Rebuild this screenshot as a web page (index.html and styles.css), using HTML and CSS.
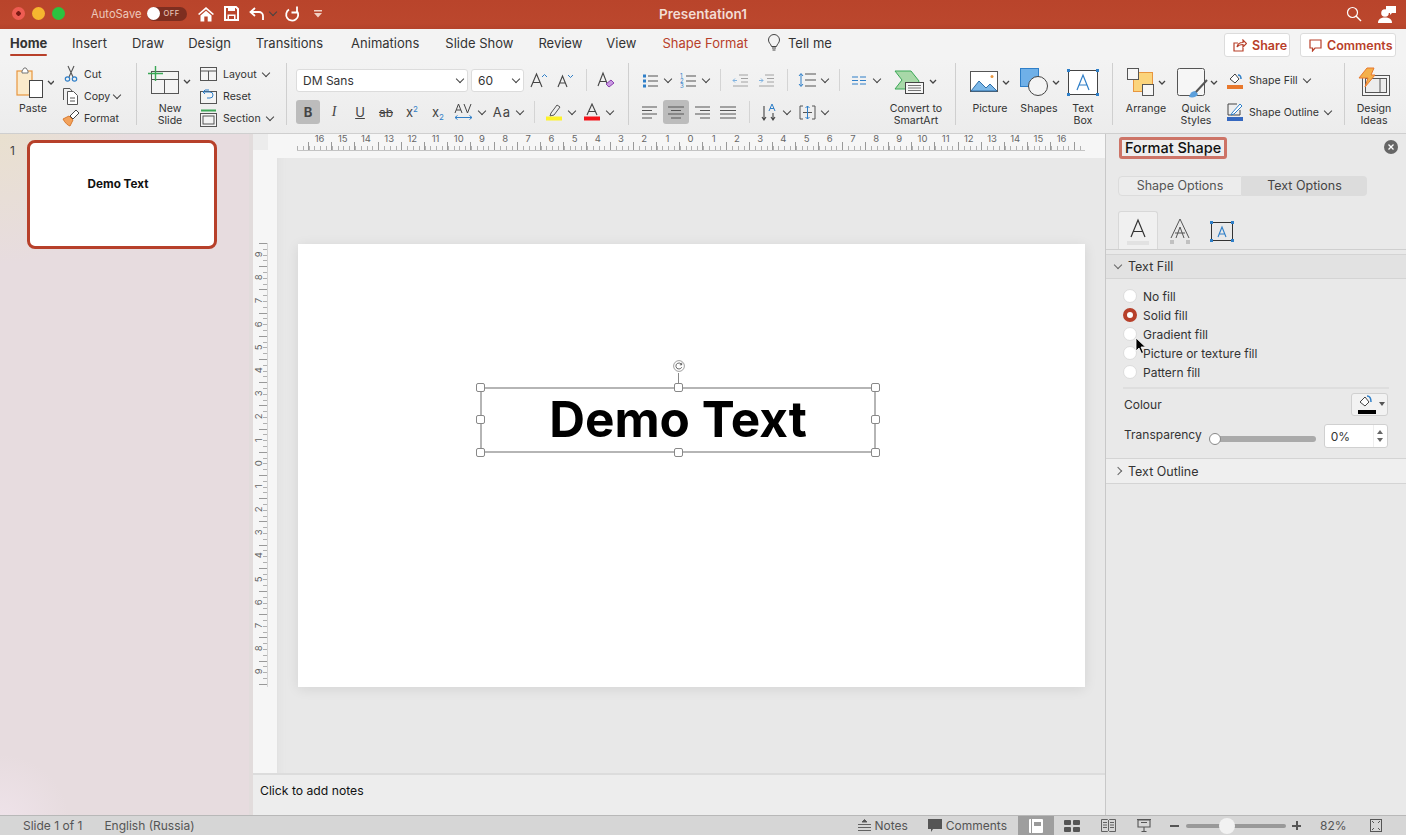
FILE: index.html
```html
<!DOCTYPE html>
<html lang="en">
<head>
    <meta charset="UTF-8">
    <title>Presentation1</title>
    <link rel="stylesheet" href="styles.css">
</head>
<body>
<div class="app">

    <!-- Title bar -->
    <header class="titlebar">
        <div class="tb-left">
            <span class="light red"></span><span class="light yellow"></span><span class="light green"></span>
            <span class="autosave">AutoSave</span>
            <span class="toggle"><i></i><b>OFF</b></span>
            <svg class="qa qa-home" width="18" height="16" viewBox="0 0 18 16"><path d="M1 8l8-7 8 7-1.2 1L9 3.2 2.2 9zM3.5 9.5L9 4.8l5.500 4.700V15.500h-3.800v-5H7.300v5H3.500z" fill="#fff"/></svg>
            <svg class="qa qa-save" width="15" height="15" viewBox="0 0 15 15"><path d="M1 1h11l2 2v11H1z" fill="none" stroke="#fff" stroke-width="2"/><path d="M4 1h7v4H4zM3.500 8.500h8V14h-8z" fill="#fff"/><path d="M5 10h5v3H5z" fill="#b8442b"/></svg>
            <svg class="qa qa-undo" width="16" height="14" viewBox="0 0 16 14"><path d="M6 1L1.500 5 6 9M2 5h8a4 4 0 014 4v4" fill="none" stroke="#fff" stroke-width="1.800"/></svg>
            <span class="chev light-chev"></span>
            <svg class="qa qa-redo" width="16" height="16" viewBox="0 0 16 16"><path d="M5 3.500a6 6 0 108 1.500" fill="none" stroke="#fff" stroke-width="1.800"/><path d="M13 .5v6H7.500" fill="none" stroke="#fff" stroke-width="1.800"/></svg>
            <svg class="qa qa-more" width="8" height="8" viewBox="0 0 8 8"><path d="M0 0h8v1.500H0zM0 3h8L4 7.500z" fill="#f0d0c4"/></svg>
        </div>
        <div class="tb-title">Presentation1</div>
        <div class="tb-right">
            <svg width="16" height="16" viewBox="0 0 16 16"><circle cx="6.500" cy="6.500" r="5" fill="none" stroke="#fff" stroke-width="1.200"/><path d="M10 10l5 5" stroke="#fff" stroke-width="1.400"/></svg>
            <svg width="20" height="20" viewBox="0 0 20 20"><path d="M9 2h10v7h-4l-2 2V9H9z" fill="#fff"/><circle cx="8" cy="9" r="3.800" fill="#fff"/><path d="M1 19c0-4 3-5.500 7-5.500s7 1.500 7 5.500z" fill="#fff"/></svg>
        </div>
    </header>

    <!-- Tabs -->
    <nav class="tabs">
        <span class="tab active">Home</span>
        <span class="tab t-insert">Insert</span>
        <span class="tab t-draw">Draw</span>
        <span class="tab t-design">Design</span>
        <span class="tab t-trans">Transitions</span>
        <span class="tab t-anim">Animations</span>
        <span class="tab t-show">Slide Show</span>
        <span class="tab t-review">Review</span>
        <span class="tab t-view">View</span>
        <span class="tab t-shape">Shape Format</span>
        <svg class="bulb" width="14" height="18" viewBox="0 0 14 18"><path d="M4.500 12.500C4 10 1.500 9 1.500 6a5.500 5.500 0 0111 0c0 3-2.500 4-3 6.500z" fill="none" stroke="#444" stroke-width="1"/><path d="M5 14h4M5.500 16h3" stroke="#444" stroke-width="1.200"/></svg>
        <span class="tab t-tell">Tell me</span>
        <div class="tab-btns">
            <button class="share-btn s-share">
                <svg width="14" height="13" viewBox="0 0 14 13"><path d="M5 4H1v8h9V9M4 8c.5-3 3-4.500 6-4.500V1l3.500 3.500L10 8V5.500C7.500 5.500 5.500 6 4 8z" fill="none" stroke="#b8402a" stroke-width="1.200"/></svg>
                Share
            </button>
            <button class="share-btn s-comments">
                <svg width="13" height="13" viewBox="0 0 13 13"><path d="M1 1h11v8H6l-2.500 3V9H1z" fill="none" stroke="#b8402a" stroke-width="1.200"/></svg>
                Comments
            </button>
        </div>
    </nav>

    <!-- Ribbon -->
    <section class="ribbon">

        <div class="group g-clip">
            <div class="big w42">
                <svg width="42" height="36" viewBox="0 0 42 36"><rect x="5" y="5" width="15" height="24" fill="#fbeacb" stroke="#e8963f" stroke-width="1.200"/><path d="M10 5l2-3h2l2 3v2h-6z" fill="#fff" stroke="#777"/><rect x="17.500" y="14.500" width="13" height="17" fill="#fff" stroke="#444"/><path d="M36 15l3 3 3-3" fill="none" stroke="#444" stroke-width="1.300"/></svg>
                <span>Paste</span>
            </div>
            <div class="stack s1">
                <div class="row-item">
                    <svg width="18" height="18" viewBox="0 0 18 18"><path d="M6 1l5 11M12 1L7 12" stroke="#555" stroke-width="1.100"/><circle cx="5.500" cy="14" r="2.200" fill="none" stroke="#2f7fc8" stroke-width="1.200"/><circle cx="12.500" cy="14" r="2.200" fill="none" stroke="#2f7fc8" stroke-width="1.200"/></svg>
                    <span>Cut</span>
                </div>
                <div class="row-item">
                    <svg width="18" height="18" viewBox="0 0 18 18"><path d="M1.500 13V1.500H8L10 4" fill="none" stroke="#555"/><path d="M5.500 4.500h6l4 4v9h-10z" fill="#fff" stroke="#555"/><path d="M8 11h5M8 14h5" stroke="#555"/></svg>
                    <span>Copy</span><span class="chev"></span>
                </div>
                <div class="row-item">
                    <svg width="18" height="18" viewBox="0 0 18 18"><path d="M1 10l6-3 4 4-3 6c-2-.5-5-3-7-7z" fill="#f2a25c" stroke="#d87a30"/><path d="M8 7l6-6 3 3-6 6z" fill="#fff" stroke="#444"/></svg>
                    <span>Format</span>
                </div>
            </div>
        </div>

        <div class="group g-slides">
            <div class="big w46">
                <svg width="46" height="36" viewBox="0 0 46 36"><rect x="4.500" y="5.500" width="27" height="22" fill="#f4f4f4" stroke="#555"/><path d="M4.500 13.500h27M17.500 13.500v14" stroke="#555"/><path d="M1 7.500h15M8.500 0v15" stroke="#3aa856" stroke-width="1.400"/><path d="M37 14l3 3 3-3" fill="none" stroke="#444" stroke-width="1.300"/></svg>
                <span>New<br>Slide</span>
            </div>
            <div class="stack s2">
                <div class="row-item">
                    <svg width="17" height="15" viewBox="0 0 17 15"><rect x=".5" y=".5" width="16" height="13" fill="#f4f4f4" stroke="#555"/><path d="M.5 4h16M8.500 4v9.500" stroke="#555"/></svg>
                    <span>Layout</span><span class="chev"></span>
                </div>
                <div class="row-item">
                    <svg width="17" height="15" viewBox="0 0 17 15"><rect x=".5" y="2.500" width="16" height="12" fill="#f4f4f4" stroke="#555"/><path d="M9 1H5L3 3l2 2M3 3h7a3 3 0 010 6H7" fill="none" stroke="#2f7fc8"/></svg>
                    <span>Reset</span>
                </div>
                <div class="row-item">
                    <svg width="17" height="18" viewBox="0 0 17 18"><path d="M1 1.500h15" stroke="#3aa856" stroke-width="2"/><rect x=".5" y="4.500" width="16" height="13" fill="#f4f4f4" stroke="#555"/><rect x="3" y="7" width="11" height="8" fill="#f4f4f4" stroke="#555"/></svg>
                    <span>Section</span><span class="chev"></span>
                </div>
            </div>
        </div>

        <div class="group g-font">
            <div class="rows">
                <div class="row">
                    <div class="select sel-font">DM Sans<span class="chev"></span></div>
                    <div class="select sel-size">60<span class="chev"></span></div>
                    <span class="tool"><svg width="18" height="16" viewBox="0 0 18 16"><path d="M1 15L6.500 2 12 15M3 10.500h7" fill="none" stroke="#444" stroke-width="1.100"/><path d="M12 5l2.500-2.500L17 5" fill="none" stroke="#2f7fc8"/></svg></span>
                    <span class="tool"><svg width="18" height="16" viewBox="0 0 18 16"><path d="M2 15L6.500 4 11 15M4 11h5" fill="none" stroke="#444" stroke-width="1.100"/><path d="M12 3l2.500 2.500L17 3" fill="none" stroke="#2f7fc8"/></svg></span>
                    <span class="sep"></span>
                    <span class="tool"><svg width="18" height="18" viewBox="0 0 18 18"><path d="M1 15L6 2l5 13M3 10.500h6" fill="none" stroke="#444" stroke-width="1.100"/><path d="M9 13l5-4 3 3-5 4z" fill="#c89ae0" stroke="#8a3fb0"/></svg></span>
                </div>
                <div class="row">
                    <span class="tool on bold-btn"><b>B</b></span>
                    <span class="tool serif-i">I</span>
                    <span class="tool under">U</span>
                    <span class="tool strike">ab</span>
                    <span class="tool">x<sup class="blue">2</sup></span>
                    <span class="tool">x<sub class="blue">2</sub></span>
                    <span class="tool"><svg width="20" height="18" viewBox="0 0 20 18"><path d="M1 10l3.500-9L8 10M2.300 7h4.500M10 1l3.500 9L17 1" fill="none" stroke="#444"/><path d="M1 14.500h17M3.500 12.500l-2.500 2 2.500 2M15.500 12.500l2.500 2-2.500 2" fill="none" stroke="#2f7fc8"/></svg></span><span class="chev"></span>
                    <span class="tool aa">Aa</span><span class="chev"></span>
                    <span class="sep"></span>
                    <span class="tool"><svg width="18" height="18" viewBox="0 0 18 18"><path d="M6 10l6-8 3 2-6 8-4 1z" fill="none" stroke="#555"/><rect x="1" y="13.500" width="16" height="4" fill="#fdf22a"/></svg></span><span class="chev"></span>
                    <span class="tool"><svg width="18" height="18" viewBox="0 0 18 18"><path d="M4 12L9 1l5 11M5.500 8.500h7" fill="none" stroke="#444" stroke-width="1.100"/><rect x="1" y="13.500" width="16" height="4" fill="#f4141a"/></svg></span><span class="chev"></span>
                </div>
            </div>
        </div>

        <div class="group g-para">
            <div class="rows">
                <div class="row">
                    <span class="tool"><svg width="17" height="15" viewBox="0 0 17 15"><path d="M1 1.500h3v3H1zM1 6.500h3v3H1zM1 11.500h3v3H1z" fill="#2f7fc8"/><path d="M6 3h10M6 8h10M6 13h10" stroke="#555" stroke-width="1.200"/></svg></span><span class="chev"></span>
                    <span class="tool"><svg width="17" height="15" viewBox="0 0 17 15"><text x="0" y="5" class="mini">1</text><text x="0" y="10" class="mini">2</text><text x="0" y="15" class="mini">3</text><path d="M6 3h10M6 8h10M6 13h10" stroke="#555" stroke-width="1.200"/></svg></span><span class="chev"></span>
                    <span class="sep"></span>
                    <span class="tool faded"><svg width="16" height="13" viewBox="0 0 16 13"><path d="M7 1h9M9 4.500h7M9 8h7M1 12h15" stroke="#888"/><path d="M5 6.500H1M3 4.500l-2 2 2 2" fill="none" stroke="#5b9fdc"/></svg></span>
                    <span class="tool faded"><svg width="16" height="13" viewBox="0 0 16 13"><path d="M7 1h9M9 4.500h7M9 8h7M1 12h15" stroke="#888"/><path d="M1 6.500h4M3 4.500l2 2-2 2" fill="none" stroke="#5b9fdc"/></svg></span>
                    <span class="sep"></span>
                    <span class="tool"><svg width="18" height="16" viewBox="0 0 18 16"><path d="M7 2h11M7 8h11M7 14h11" stroke="#555" stroke-width="1.200"/><path d="M3 2v12M1 4l2-2.500L5 4M1 12l2 2.500L5 12" fill="none" stroke="#2f7fc8"/></svg></span><span class="chev"></span>
                    <span class="sep"></span>
                    <span class="tool"><svg width="14" height="9" viewBox="0 0 14 9"><path d="M0 1h6M0 4.500h6M0 8h6M8 1h6M8 4.500h6M8 8h6" stroke="#2f7fc8" stroke-width="1.200"/></svg></span><span class="chev"></span>
                </div>
                <div class="row">
                    <span class="tool"><svg width="16" height="13" viewBox="0 0 16 13"><path d="M0 1h15M0 4.500h10M0 8h15M0 12h10" stroke="#555" stroke-width="1.100"/></svg></span>
                    <span class="tool on"><svg width="16" height="13" viewBox="0 0 16 13"><path d="M0 1h16M3 4.500h10M0 8h16M3 12h10" stroke="#555" stroke-width="1.100"/></svg></span>
                    <span class="tool"><svg width="16" height="13" viewBox="0 0 16 13"><path d="M1 1h15M6 4.500h10M1 8h15M6 12h10" stroke="#555" stroke-width="1.100"/></svg></span>
                    <span class="tool"><svg width="16" height="13" viewBox="0 0 16 13"><path d="M0 1h16M0 4.500h16M0 8h16M0 12h16" stroke="#555" stroke-width="1.100"/></svg></span>
                    <span class="sep"></span>
                    <span class="tool"><svg width="16" height="18" viewBox="0 0 16 18"><path d="M3 3v14M1 14l2 3 2-3M12 10v7M10 14l2 3 2-3" fill="none" stroke="#444" stroke-width="1.100"/><path d="M8 8l3-7 3 7M9 5.500h4" fill="none" stroke="#2f7fc8"/></svg></span><span class="chev"></span>
                    <span class="tool"><svg width="17" height="15" viewBox="0 0 17 15"><path d="M4 1H1v13h3M13 1h3v13h-3M4 7.500h9" fill="none" stroke="#555"/><path d="M8.500 1v13M6.500 3l2-2 2 2M6.500 12l2 2 2-2" fill="none" stroke="#2f7fc8"/></svg></span><span class="chev"></span>
                </div>
            </div>
            <div class="big w58">
                <svg width="58" height="36" viewBox="0 0 58 36"><path d="M8 5h16l8 10-3 8H8l7-9z" fill="#a8d8a8" stroke="#3aa856"/><rect x="18.500" y="16.500" width="18" height="11" fill="#f6f6f6" stroke="#444"/><path d="M21 19.500h13M21 22h13M21 24.500h13" stroke="#777"/><path d="M43 14l3 3 3-3" fill="none" stroke="#444" stroke-width="1.300"/></svg>
                <span>Convert to<br>SmartArt</span>
            </div>
        </div>

        <div class="group g-insert">
            <div class="big w50">
                <svg width="50" height="36" viewBox="0 0 50 36"><rect x="5.500" y="5.500" width="27" height="20" fill="#fff" stroke="#555"/><path d="M6 25l8-10 7 7 4-4 7 7z" fill="#7cb8e8" stroke="#2f6fa8"/><circle cx="27" cy="10.500" r="1.500" fill="#e8963f"/><path d="M38 15l3 3 3-3" fill="none" stroke="#444" stroke-width="1.300"/></svg>
                <span>Picture</span>
            </div>
            <div class="big w48">
                <svg width="48" height="36" viewBox="0 0 48 36"><rect x="5.500" y="2.500" width="18" height="18" fill="#6fb0e8" stroke="#2f7fc8"/><circle cx="23" cy="20" r="9.500" fill="#f4f4f4" stroke="#444"/><path d="M38 15l3 3 3-3" fill="none" stroke="#444" stroke-width="1.300"/></svg>
                <span>Shapes</span>
            </div>
            <div class="big w40">
                <svg width="40" height="36" viewBox="0 0 40 36"><rect x="5.500" y="4.500" width="29" height="24" fill="#fff" stroke="#444"/><path d="M14 24l6-15 6 15M16 19h8" fill="none" stroke="#2f7fc8" stroke-width="1.200"/><path d="M4 3h3v3H4zM33 3h3v3h-3zM4 27h3v3H4zM33 27h3v3h-3z" fill="#2f7fc8"/></svg>
                <span>Text<br>Box</span>
            </div>
        </div>

        <div class="group g-format">
            <div class="big w44">
                <svg width="44" height="36" viewBox="0 0 44 36"><rect x="9.500" y="6.500" width="19" height="19" fill="#fbd47c" stroke="#e8963f"/><rect x="3.500" y="2.500" width="11" height="11" fill="#f6f6f6" stroke="#555"/><rect x="18.500" y="18.500" width="11" height="11" fill="#f6f6f6" stroke="#555"/><path d="M35 15l3 3 3-3" fill="none" stroke="#444" stroke-width="1.300"/></svg>
                <span>Arrange</span>
            </div>
            <div class="big w50">
                <svg width="50" height="36" viewBox="0 0 50 36"><rect x="6.500" y="2.500" width="27" height="27" rx="2" fill="#f6f6f6" stroke="#555"/><path d="M36 14L24 27" stroke="#555" stroke-width="2"/><path d="M18 31c1-4 3-6 6-6l3 3c-1 3-5 4-9 3z" fill="#5b9fdc"/><path d="M40 15l3 3 3-3" fill="none" stroke="#444" stroke-width="1.300"/></svg>
                <span>Quick<br>Styles</span>
            </div>
            <div class="stack s3">
                <div class="row-item">
                    <svg width="16" height="18" viewBox="0 0 16 18"><path d="M3 8l5-5 4 5-4 4z" fill="#fff" stroke="#444"/><path d="M11 4c2 0 3 2 3 4" fill="none" stroke="#2f7fc8" stroke-width="1.500"/><rect y="14" width="16" height="4" fill="#e8782c"/></svg>
                    <span>Shape Fill</span><span class="chev"></span>
                </div>
                <div class="row-item">
                    <svg width="16" height="18" viewBox="0 0 16 18"><path d="M1 1h9M1 1v11h12V7" fill="none" stroke="#444"/><path d="M5 10l8-9 2 2-8 8-3 1z" fill="#fff" stroke="#2f7fc8"/><rect y="14" width="16" height="4" fill="#3568c0"/></svg>
                    <span>Shape Outline</span><span class="chev"></span>
                </div>
            </div>
        </div>

        <div class="group g-ideas">
            <div class="big w48">
                <svg width="48" height="36" viewBox="0 0 48 36"><rect x="12.500" y="9.500" width="27" height="20" fill="#f4f4f4" stroke="#555"/><rect x="15.500" y="12.500" width="21" height="14" fill="#ececec" stroke="#555"/><path d="M30 12.500v14" stroke="#555"/><path d="M17 2h7l-3 7h4l-10 12 3-9H9z" fill="#f4b04a" stroke="#e8782c"/></svg>
                <span>Design<br>Ideas</span>
            </div>
        </div>
    </section>

    <main class="main">
        <!-- Slide thumbnails -->
        <aside class="thumbs">
            <span class="thumb-num">1</span>
            <div class="thumb">Demo Text</div>
        </aside>

        <!-- Editor -->
        <div class="editor">
            <div class="hruler-row">
                <div class="corner"></div>
                <div class="hruler">
                    <span>16</span><span>15</span><span>14</span><span>13</span><span>12</span><span>11</span><span>10</span><span>9</span><span>8</span><span>7</span><span>6</span><span>5</span><span>4</span><span>3</span><span>2</span><span>1</span><span>0</span><span>1</span><span>2</span><span>3</span><span>4</span><span>5</span><span>6</span><span>7</span><span>8</span><span>9</span><span>10</span><span>11</span><span>12</span><span>13</span><span>14</span><span>15</span><span>16</span>
                </div>
            </div>
            <div class="work">
                <div class="vruler-col">
                    <div class="vruler">
                        <span>9</span><span>8</span><span>7</span><span>6</span><span>5</span><span>4</span><span>3</span><span>2</span><span>1</span><span>0</span><span>1</span><span>2</span><span>3</span><span>4</span><span>5</span><span>6</span><span>7</span><span>8</span><span>9</span>
                    </div>
                </div>
                <div class="canvas">
                    <div class="slide">
                        <div class="textbox">
                            Demo Text
                            <i class="rot-stem"></i>
                            <svg class="rot" width="12" height="12" viewBox="0 0 12 12"><circle cx="6" cy="6" r="5.400" fill="#fff" stroke="#888" stroke-width=".8"/><path d="M8.500 4.500A3 3 0 106 9a3 3 0 002.700-1.800M8.700 2.800v2H6.800" fill="none" stroke="#444" stroke-width=".8"/></svg>
                            <i class="h tl"></i><i class="h tc"></i><i class="h tr"></i>
                            <i class="h ml"></i><i class="h mr"></i>
                            <i class="h bl"></i><i class="h bc"></i><i class="h br"></i>
                        </div>
                    </div>
                </div>
            </div>
            <div class="notes">Click to add notes</div>
        </div>

        <!-- Format Shape pane -->
        <aside class="pane">
            <div class="pane-head">
                <span class="pane-title">Format Shape</span>
                <span class="pane-close">
                    <svg width="14" height="14" viewBox="0 0 14 14"><circle cx="7" cy="7" r="7" fill="#666"/><path d="M4.500 4.500l5 5M9.500 4.500l-5 5" stroke="#fff" stroke-width="1.300"/></svg>
                </span>
            </div>
            <div class="seg">
                <span class="seg-a">Shape Options</span>
                <span class="seg-b">Text Options</span>
            </div>
            <div class="icon-tabs">
                <span class="itab current">
                    <svg width="24" height="30" viewBox="0 0 24 30"><path d="M5 20L12 3l7 17M7.500 14.500h9" fill="none" stroke="#333" stroke-width="1.200"/><rect x="1" y="24" width="22" height="4" fill="#e2e2e2"/></svg>
                </span>
                <span class="itab">
                    <svg width="22" height="28" viewBox="0 0 22 28"><path d="M2 21L11 2l9 19M6 16h10M7 21l4-11 4 11" fill="none" stroke="#555" stroke-width="1"/><path d="M2 23v4M4 23v4M18 23v4M20 23v4" stroke="#999"/></svg>
                </span>
                <span class="itab">
                    <svg width="26" height="24" viewBox="0 0 26 24"><rect x="2.500" y="3.500" width="21" height="18" fill="none" stroke="#333"/><path d="M9 18l4-10 4 10M10.500 15h5" fill="none" stroke="#2f7fc8" stroke-width="1.100"/><path d="M1 2h3v3H1zM22 2h3v3h-3zM1 20h3v3H1zM22 20h3v3h-3z" fill="#2f7fc8"/></svg>
                </span>
            </div>
            <div class="sec sec-open"><span class="sec-chev down"></span>Text Fill</div>
            <div class="fill-opts">
                <label class="radio"><i></i>No fill</label>
                <label class="radio on"><i></i>Solid fill</label>
                <label class="radio"><i></i>Gradient fill</label>
                <label class="radio"><i></i>Picture or texture fill</label>
                <label class="radio"><i></i>Pattern fill</label>
            </div>
            <div class="prop prop-colour">
                <span>Colour</span>
                <span class="colour-btn">
                    <svg width="18" height="19" viewBox="0 0 18 19"><path d="M2 7l5-5 4 5-4 4z" fill="#fff" stroke="#444"/><path d="M9 1c3 0 4 3 4 6" fill="none" stroke="#2f7fc8" stroke-width="1.500"/><rect y="15" width="18" height="4" fill="#000"/></svg>
                    <i class="caret"></i>
                </span>
            </div>
            <div class="prop prop-trans">
                <span class="trans-label">Transparency</span>
                <span class="slider"><i></i></span>
                <span class="num-input">0%<span class="spin"><i class="up"></i><i class="dn"></i></span></span>
            </div>
            <div class="sec sec-closed"><span class="sec-chev right"></span>Text Outline</div>
            <svg class="cursor" width="12" height="18" viewBox="0 0 12 18"><path d="M1 1v13l3-3 2.500 5.500 2-1L6 10h4.500z" fill="#000" stroke="#fff" stroke-width=".8"/></svg>
        </aside>
    </main>

    <!-- Status bar -->
    <footer class="status">
        <span class="st-slide">Slide 1 of 1</span>
        <span class="st-lang">English (Russia)</span>
        <div class="st-right">
            <svg class="st-notes" width="13" height="13" viewBox="0 0 13 13"><path d="M4 3l2.500-2.500L9 3zM0 5.500h13M0 8.500h13M0 11.500h13" stroke="#555" fill="#555" stroke-width=".9"/></svg>
            <span class="st-t1">Notes</span>
            <svg class="st-cm" width="14" height="13" viewBox="0 0 14 13"><path d="M0 0h14v10H5l-2 3v-3H0z" fill="#555"/></svg>
            <span class="st-t2">Comments</span>
            <span class="view on"><svg width="14" height="14" viewBox="0 0 14 14"><rect width="14" height="14" rx="1" fill="#fff"/><path d="M2.500 0v14" stroke="#999"/><path d="M5 3h7v4H5z" fill="#999"/></svg></span>
            <span class="view"><svg width="16" height="12" viewBox="0 0 16 12"><rect width="7" height="5" rx="1" fill="#555"/><rect x="9" width="7" height="5" rx="1" fill="#555"/><rect y="7" width="7" height="5" rx="1" fill="#555"/><rect x="9" y="7" width="7" height="5" rx="1" fill="#555"/></svg></span>
            <span class="view"><svg width="15" height="13" viewBox="0 0 15 13"><path d="M.5.500h6l1 1 1-1h6v12h-6l-1-1-1 1h-6zM7.500 1.500v10M2 3.500h4M2 6h4M2 8.500h4M9 3.500h4M9 6h4M9 8.500h4" fill="none" stroke="#555" stroke-width=".9"/></svg></span>
            <span class="view"><svg width="14" height="13" viewBox="0 0 14 13"><path d="M1 1h12v7H1zM0 .5h14M7 8v4M4.500 12.500h5M4 3.500h6" fill="none" stroke="#555" stroke-width="1.100"/></svg></span>
            <span class="zoom-minus"></span>
            <span class="zoom-track"><i></i></span>
            <span class="zoom-plus"></span>
            <span class="zoom-pct">82%</span>
            <svg class="fit" width="12" height="13" viewBox="0 0 12 13"><rect x=".5" y=".5" width="11" height="12" fill="none" stroke="#555"/><path d="M2 2l2 2M10 2L8 4M2 11l2-2M10 11L8 9" stroke="#555"/></svg>
        </div>
    </footer>
</div>
</body>
</html>
```

FILE: styles.css
```css
* {
    box-sizing: border-box;
}
html, body {
    margin: 0;
    height: 100%;
    overflow: hidden;
}
body {
    font-family: "Inter", "Liberation Sans", sans-serif;
    font-size: 10.6px;
    color: #333;
    background-color: #e8e8e8;
}
svg {
    display: block;
    flex: none;
}
.app {
    display: flex;
    flex-direction: column;
    height: 835px;
}

/* title bar */
.titlebar {
    display: grid;
    grid-template-columns: 1fr auto 1fr;
    align-items: center;
    height: 29px;
    padding-bottom: 2px;
    background: linear-gradient(#b9442b, #bb472d 80%, #b4432a);
    color: #f2d9d0;
}
.tb-left {
    display: flex;
    align-items: center;
    padding-left: 12px;
}
.light {
    width: 13px;
    height: 13px;
    border-radius: 50%;
    margin-right: 7px;
}
.light.red {
    background: radial-gradient(#7a1a14 0 2px, #ee5c52 2.5px);
}
.light.yellow {
    background-color: #f6b62f;
}
.light.green {
    background-color: #2cc23f;
}
.autosave {
    margin-left: 19px;
    font-size: 11.2px;
    color: #edc9bc;
}
.toggle {
    display: flex;
    align-items: center;
    width: 40px;
    height: 14px;
    margin-left: 6px;
    border-radius: 7px;
    background-color: #7d2e20;
}
.toggle i {
    width: 13px;
    height: 13px;
    border-radius: 50%;
    background-color: #fff;
}
.toggle b {
    margin-left: 3px;
    font-size: 7.5px;
    font-weight: 500;
    letter-spacing: .5px;
    color: #e8c4b8;
}
.qa-home { margin-left: 10px; }
.qa-save { margin-left: 9px; }
.qa-undo { margin-left: 10px; }
.light-chev { margin-left: 2px; }
.light-chev::before { border-color: #f0d0c4; }
.qa-redo { margin-left: 5px; }
.qa-more { margin-left: 14px; }
.tb-title {
    font-size: 13.500px;
    font-weight: 600;
    color: #f3dcd4;
}
.tb-right {
    display: flex;
    align-items: center;
    justify-content: flex-end;
    gap: 15px;
    padding-right: 9px;
}

/* tabs */
.tabs {
    display: flex;
    align-items: center;
    height: 31px;
    padding: 0 0 4px 10px;
    background-color: #f3f3f3;
    font-size: 13px;
    color: #333;
}
.tab {
    white-space: nowrap;
}
.tab.active {
    position: relative;
    width: 37px;
    font-weight: 700;
}
.tab.active::after {
    content: "";
    position: absolute;
    left: 0;
    right: 0;
    bottom: -5px;
    height: 2px;
    border-radius: 1px;
    background-color: #b8402a;
}
.t-insert { margin-left: 25px; }
.t-draw { margin-left: 25px; }
.t-design { margin-left: 24px; }
.t-trans { margin-left: 25px; }
.t-anim { margin-left: 28px; }
.t-show { margin-left: 26px; }
.t-review { margin-left: 25px; }
.t-view { margin-left: 24px; }
.t-shape { margin-left: 26px; color: #b8402a; }
.bulb { margin-left: 19px; }
.t-tell { margin-left: 7px; }
.tab-btns {
    display: flex;
    align-self: flex-end;
    gap: 10px;
    margin: 0 0 -1px auto;
    padding-right: 10px;
}
.share-btn {
    display: flex;
    align-items: center;
    gap: 5px;
    height: 24px;
    padding: 0 0 0 8px;
    border: 1px solid #dcdcdc;
    border-radius: 3px;
    background-color: #fff;
    font-family: inherit;
    font-size: 12.5px;
    font-weight: 600;
    color: #b8402a;
}
.s-share { width: 66px; }
.s-comments { width: 96px; }

/* ribbon */
.ribbon {
    display: flex;
    height: 74px;
    padding-bottom: 1px;
    border-bottom: 1px solid #cfcfcf;
    background: linear-gradient(#f3f3f3, #ececec);
}
.group {
    display: flex;
    position: relative;
    flex: none;
    height: 73px;
}
.group::after {
    content: "";
    position: absolute;
    right: 0;
    top: 3px;
    bottom: 8px;
    width: 1px;
    background-color: #cfcfcf;
}
.g-clip { width: 137px; padding-left: 12px; }
.g-slides { width: 150px; padding-left: 10px; }
.g-font { width: 342px; padding-left: 8px; }
.g-para { width: 327px; padding-left: 8px; }
.g-insert { width: 157px; padding-left: 9px; }
.g-format { width: 232px; padding-left: 11px; }
.g-ideas { width: 62px; padding-left: 5px; }
.g-ideas::after { display: none; }

.big {
    display: flex;
    flex-direction: column;
    align-items: center;
    flex: none;
    padding-top: 6px;
    line-height: 12px;
    text-align: center;
    white-space: nowrap;
}
.big span {
    display: block;
    margin-top: 1px;
}
.w40 { width: 40px; }
.w42 { width: 42px; }
.w44 { width: 44px; }
.w46 { width: 46px; }
.w48 { width: 48px; }
.w50 { width: 50px; }
.w58 { width: 58px; }
.g-para .big { margin-left: 4px; }
.g-format .big + .big { margin-left: 3px; }

.stack {
    display: flex;
    flex-direction: column;
    padding-top: 3px;
}
.s1 { margin-left: 8px; }
.s2 { margin-left: 7px; }
.s3 { margin-left: 6px; padding-top: 11px; gap: 14px; }
.row-item {
    display: flex;
    align-items: center;
    gap: 4px;
    height: 22px;
    white-space: nowrap;
}
.s3 .row-item { height: 18px; gap: 6px; }
.s2 .row-item { gap: 6px; }
.row-item .chev { margin-left: -3px; }

.rows {
    display: flex;
    flex-direction: column;
    gap: 8px;
    padding-top: 8px;
    flex: none;
}
.row {
    display: flex;
    align-items: center;
    height: 24px;
}
.tool {
    display: flex;
    align-items: center;
    justify-content: center;
    flex: none;
    width: 26px;
    height: 24px;
    font-size: 13px;
    color: #444;
}
.tool.on {
    border-radius: 3px;
    background-color: #bcbcbc;
}
.bold-btn {
    width: 24px;
    margin: 0 1px;
}
.serif-i {
    font-family: "Liberation Serif", serif;
    font-style: italic;
    font-size: 14px;
}
.under { text-decoration: underline; }
.strike { text-decoration: line-through; font-size: 12px; }
.aa { letter-spacing: 1px; font-size: 13px; }
.tool sup, .tool sub {
    font-size: 8px;
    line-height: 10px;
}
.tool sup {
    align-self: flex-start;
    margin-top: 4px;
}
.tool sub {
    align-self: flex-end;
    margin-bottom: 2px;
}
.blue { color: #2f7fc8; }
.faded { opacity: .75; }
.mini {
    font-size: 6px;
    fill: #2f7fc8;
}
.chev {
    display: flex;
    align-items: center;
    justify-content: center;
    flex: none;
    width: 12px;
    height: 12px;
}
.chev::before {
    content: "";
    width: 5px;
    height: 5px;
    margin-top: -3px;
    border-right: 1.3px solid #444;
    border-bottom: 1.3px solid #444;
    transform: rotate(45deg);
}
.tool + .chev { margin-left: -1px; }
.chev + .tool { margin-left: 1px; }
.sep {
    flex: none;
    width: 1px;
    height: 22px;
    margin: 0 6px 0 8px;
    background-color: #d4d4d4;
}
.select {
    display: flex;
    align-items: center;
    justify-content: space-between;
    flex: none;
    height: 23px;
    padding: 0 1px 0 6px;
    border: 1px solid #dcdcdc;
    border-radius: 3px;
    background-color: #fff;
    font-size: 12px;
    color: #333;
}
.sel-font { width: 172px; margin-left: 1px; }
.sel-size { width: 53px; margin: 0 2px 0 3px; }

/* main area */
.main {
    display: flex;
    flex: 1;
    min-height: 0;
}
.thumbs {
    display: flex;
    align-items: flex-start;
    flex: none;
    width: 253px;
    padding: 6px 0 0 8px;
    border-right: 4px solid #e2dcdc;
    background:
        radial-gradient(circle at 0 690px, #efe3ea, transparent 70px),
        radial-gradient(circle at 0 0, #e9e0cf, transparent 130px),
        #e7dcdf;
}
.thumb-num {
    width: 19px;
    padding: 1px 0 0 2px;
    font-size: 12px;
    line-height: 20px;
    color: #444;
}
.thumb {
    display: flex;
    justify-content: center;
    width: 190px;
    height: 109px;
    padding: 34px 8px 0 0;
    border: 3px solid #b7402a;
    border-radius: 8px;
    background-color: #fff;
    font-size: 11.700px;
    font-weight: 700;
    color: #111;
}

.editor {
    display: flex;
    flex-direction: column;
    width: 852px;
    flex: none;
    background-color: #f6f6f6;
}
.hruler-row {
    display: flex;
    height: 24px;
    flex: none;
}
.corner {
    width: 15px;
    height: 16px;
    background-color: #ececec;
}
.hruler {
    display: flex;
    width: 788px;
    height: 17px;
    margin-left: 29px;
    padding-left: 11px;
    background:
        repeating-linear-gradient(90deg, #999 0 1px, transparent 1px 23.2px) 11.400px 100% / 100% 8px no-repeat,
        repeating-linear-gradient(90deg, #b0b0b0 0 1px, transparent 1px 5.800px) 0 100% / 100% 4px no-repeat;
    border-bottom: 1px solid #c4c4c4;
}
.hruler span {
    flex: none;
    width: 23.2px;
    font-size: 9.500px;
    line-height: 10px;
    text-align: center;
    color: #666;
}
.work {
    display: flex;
    flex: 1;
    min-height: 0;
}
.vruler-col {
    flex: none;
    width: 24px;
    padding-top: 85px;
}
.vruler {
    display: flex;
    flex-direction: column;
    width: 15px;
    height: 444px;
    background:
        repeating-linear-gradient(#999 0 1px, transparent 1px 23.2px) 100% 0 / 8px 100% no-repeat,
        repeating-linear-gradient(#b0b0b0 0 1px, transparent 1px 5.800px) 100% 0 / 4px 100% no-repeat;
    border-right: 1px solid #d4d4d4;
}
.vruler span {
    display: flex;
    align-items: center;
    justify-content: center;
    flex: none;
    width: 9px;
    height: 23.2px;
    margin-left: 1px;
    font-size: 9.500px;
    color: #666;
    writing-mode: vertical-rl;
    transform: rotate(180deg);
}
.canvas {
    flex: 1;
    padding: 86px 0 0 21px;
    background-color: #e8e8e8;
    box-shadow: inset 10px 0 10px -10px #ddd;
}
.slide {
    position: relative;
    width: 787px;
    height: 443px;
    background-color: #fff;
    box-shadow: 0 2px 12px rgba(0, 0, 0, .09);
}
.textbox {
    position: absolute;
    left: 182px;
    top: 143px;
    display: flex;
    align-items: center;
    justify-content: center;
    width: 396px;
    height: 66px;
    padding-bottom: 3px;
    border: 2px solid #b5b5b5;
    font-size: 49.500px;
    font-weight: 700;
    color: #000;
    white-space: nowrap;
}
.rot-stem {
    position: absolute;
    left: 196px;
    top: -16px;
    width: 1px;
    height: 14px;
    background-color: #888;
}
.rot {
    position: absolute;
    left: 191px;
    top: -29px;
}
.h {
    position: absolute;
    width: 9px;
    height: 9px;
    border: 1px solid #888;
    border-radius: 2px;
    background-color: #fff;
}
.tl { left: -6px; top: -6px; }
.tc { left: 192px; top: -6px; }
.tr { right: -6px; top: -6px; }
.ml { left: -6px; top: 26px; }
.mr { right: -6px; top: 26px; }
.bl { left: -6px; bottom: -6px; }
.bc { left: 192px; bottom: -6px; }
.br { right: -6px; bottom: -6px; }
.notes {
    display: flex;
    align-items: center;
    flex: none;
    height: 42px;
    padding: 0 0 9px 7px;
    border-top: 2px solid #dcdcdc;
    background-color: #ededed;
    font-size: 12.200px;
    color: #111;
}

/* format pane */
.pane {
    position: relative;
    flex: none;
    width: 301px;
    border-left: 1px solid #c8c8c8;
    background-color: #e9e9e9;
}
.pane-head {
    display: flex;
    align-items: flex-start;
    justify-content: space-between;
    height: 27px;
    padding: 3px 8px 0 13px;
}
.pane-close {
    margin-top: 3px;
}
.pane-title {
    padding: 0 3px;
    border: 3px solid #cd7467;
    border-radius: 3px;
    font-size: 14.500px;
    font-weight: 500;
    line-height: 16px;
    color: #111;
    background-color: #eee;
}
.seg {
    display: flex;
    width: 249px;
    height: 20px;
    margin: 15px 0 0 12px;
    font-size: 12.500px;
    line-height: 18px;
    color: #555;
    text-align: center;
}
.seg-a {
    width: 124px;
    border: 1px solid #dcdcdc;
    border-radius: 4px 0 0 4px;
    background-color: #ececec;
}
.seg-b {
    flex: 1;
    line-height: 20px;
    border-radius: 0 4px 4px 0;
    background-color: #dcdcdc;
    color: #444;
}
.icon-tabs {
    display: flex;
    height: 39px;
    margin-top: 15px;
    padding-left: 12px;
    border-bottom: 1px solid #cfcfcf;
}
.itab {
    display: flex;
    align-items: center;
    justify-content: center;
    width: 40px;
    height: 38px;
    margin-right: 2px;
    padding-top: 2px;
}
.itab.current {
    border: 1px solid #d8d8d8;
    border-bottom: none;
    border-radius: 3px 3px 0 0;
    background-color: #f0f0f0;
}
.sec {
    display: flex;
    align-items: center;
    font-size: 12.500px;
    color: #333;
    border-top: 1px solid #d4d4d4;
    border-bottom: 1px solid #d4d4d4;
}
.sec-open {
    height: 25px;
    margin-top: 4px;
    background-color: #e2e2e2;
}
.sec-closed {
    height: 26px;
    margin-top: 7px;
    background-color: #efefef;
}
.sec-chev {
    width: 6px;
    height: 6px;
    margin: 0 7px 0 9px;
    border-right: 1.200px solid #666;
    border-bottom: 1.200px solid #666;
}
.sec-chev.down {
    margin-top: -3px;
    transform: rotate(45deg);
}
.sec-chev.right {
    transform: rotate(-45deg);
}
.fill-opts {
    display: flex;
    flex-direction: column;
    margin: 8px 17px 0 17px;
    padding: 0 0 5px 1px;
    border-bottom: 2px solid #dedede;
}
.radio {
    display: flex;
    align-items: center;
    gap: 6px;
    height: 19px;
    font-size: 12px;
    color: #333;
}
.radio i {
    flex: none;
    width: 14px;
    height: 14px;
    margin-left: -1px;
    border: 1px solid #dcdcdc;
    border-radius: 50%;
    background-color: #fff;
    margin-top: -2px;
}
.radio.on i {
    border: 4px solid #b7402a;
}
.prop {
    display: flex;
    align-items: center;
    padding: 0 18px 0 18px;
    font-size: 12px;
    color: #333;
}
.prop-colour {
    justify-content: space-between;
    height: 30px;
}
.colour-btn {
    display: flex;
    align-items: center;
    gap: 3px;
    width: 37px;
    height: 23px;
    padding-left: 6px;
    border: 1px solid #d0d0d0;
    border-radius: 3px;
    background-color: #f2f2f2;
}
.caret {
    width: 0;
    height: 0;
    border: 3px solid transparent;
    border-top: 4px solid #555;
    border-bottom: none;
}
.prop-trans {
    height: 30px;
    margin-top: 2px;
}
.trans-label {
    margin-top: -4px;
}
.slider {
    position: relative;
    width: 101px;
    height: 6px;
    margin: 5px 8px 0 13px;
    border-radius: 3px;
    background-color: #aaa;
}
.slider i {
    position: absolute;
    left: -6px;
    top: -3px;
    width: 12px;
    height: 12px;
    border: 1px solid #888;
    border-radius: 50%;
    background-color: #fff;
}
.num-input {
    display: flex;
    align-items: center;
    justify-content: space-between;
    width: 64px;
    height: 24px;
    padding-left: 6px;
    border: 1px solid #d0d0d0;
    border-radius: 3px;
    background-color: #fff;
}
.spin {
    display: flex;
    flex-direction: column;
    gap: 4px;
    height: 22px;
    justify-content: center;
    width: 14px;
    align-items: center;
    border-left: 1px solid #eee;
}
.spin i {
    width: 0;
    height: 0;
    border: 3px solid transparent;
}
.spin .up { border-top: none; border-bottom: 4px solid #666; }
.spin .dn { border-bottom: none; border-top: 4px solid #666; }
.cursor {
    position: absolute;
    left: 29px;
    top: 203px;
}

/* status bar */
.status {
    display: flex;
    align-items: center;
    flex: none;
    height: 20px;
    border-top: 1px solid #b8b8b8;
    background-color: #d6d6d6;
    font-size: 12px;
    color: #555;
}
.st-slide { margin-left: 23px; }
.st-lang { margin-left: 22px; }
.st-right {
    display: flex;
    align-items: center;
    margin-left: auto;
    height: 100%;
}
.st-t1 { margin-left: 3px; }
.st-cm { margin-left: 20px; }
.st-t2 { margin-left: 4px; }
.view {
    display: flex;
    align-items: center;
    justify-content: center;
    width: 36px;
    height: 100%;
}
.view.on {
    margin-left: 11px;
    background-color: #9e9e9e;
}
.zoom-minus, .zoom-plus {
    position: relative;
    width: 9px;
    height: 2px;
    background-color: #555;
}
.zoom-minus { margin-left: 8px; }
.zoom-plus { margin-left: 6px; }
.zoom-plus::after {
    content: "";
    position: absolute;
    left: 3.500px;
    top: -3.500px;
    width: 2px;
    height: 9px;
    background-color: #555;
}
.zoom-track {
    position: relative;
    width: 100px;
    height: 4px;
    margin-left: 7px;
    border-radius: 2px;
    background-color: #999;
}
.zoom-track i {
    position: absolute;
    left: 33px;
    top: -6px;
    width: 16px;
    height: 16px;
    border-radius: 50%;
    background-color: #f2f2f2;
}
.zoom-pct {
    width: 28px;
    margin-left: 19px;
}
.fit {
    margin: 0 24px 0 22px;
}
```
